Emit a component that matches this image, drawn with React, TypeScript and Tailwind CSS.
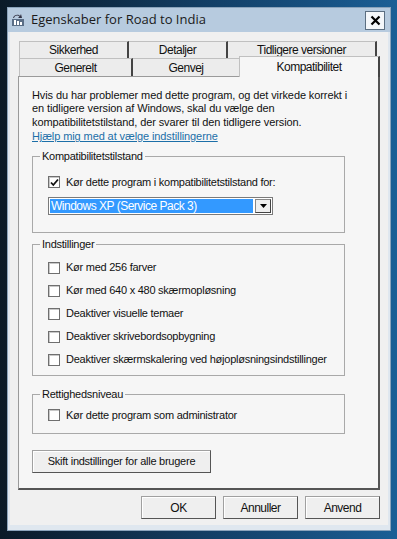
import React from 'react';

const font = { fontFamily: '"Liberation Sans", Arial, sans-serif' };

function Check({ checked = false }: { checked?: boolean }) {
  return (
    <span className="w-[12px] h-[12px] border border-[#6f6f6f] bg-white flex items-center justify-center shrink-0 shadow-[inset_1px_1px_0_#c8c8c8]">
      {checked && (
        <svg width="9" height="9" viewBox="0 0 9 9">
          <path d="M1 4.5 L3.3 7 L8 1.5" stroke="#111" strokeWidth="1.8" fill="none" />
        </svg>
      )}
    </span>
  );
}

function Row({ label, checked, h = 'h-[22px]' }: { label: string; checked?: boolean; h?: string }) {
  return (
    <div className={`flex items-center gap-[6px] whitespace-nowrap ${h}`}>
      <Check checked={checked} />
      <span>{label}</span>
    </div>
  );
}

function Group({ title, children, className }: { title: string; children: React.ReactNode; className?: string }) {
  return (
    <fieldset className={`border border-[#a9a9a9] pl-[15px] pr-[4px] m-0 ${className ?? ''}`}>
      <legend className="px-[2px] ml-[-8px] leading-[13px]">{title}</legend>
      {children}
    </fieldset>
  );
}

function Btn({ children, className }: { children: React.ReactNode; className?: string }) {
  return (
    <div className={`h-[23px] flex items-center justify-center bg-[#efefef] border border-[#a0a0a0] border-r-[#555] border-b-[#555] shadow-[inset_1px_1px_0_#fff] ${className ?? ''}`}>
      {children}
    </div>
  );
}

export default function App() {
  return (
    <div className="w-[397px] h-[539px] overflow-hidden bg-gradient-to-r from-[#0a1a28] via-[#123d63] to-[#1b5f96] pt-[7px] pl-[7px] text-[11px] tracking-[-0.25px] text-[#111]" style={font}>
      <div className="w-[384px] h-[524px] bg-[#dfe7ef] border border-[#8aa3bb] flex flex-col">
        {/* title bar */}
        <div className="h-[24px] bg-[#b7cbdf] flex items-center pl-[3px] pr-[5px] shrink-0">
          <svg width="16" height="14" viewBox="0 0 16 14" className="mr-[4px]">
            <rect x="1" y="6" width="12" height="7" fill="#5a6e86" />
            <rect x="3" y="7" width="2" height="5" fill="#fff" />
            <rect x="6" y="8" width="2" height="4" fill="#fff" />
            <rect x="9" y="9" width="2" height="3" fill="#fff" />
            <path d="M2 5 C3 1 8 1 9 3 L10 1 L11 5 L7 5 L8.5 3.5 C7 2 4 2 3 5 Z" fill="#334" />
          </svg>
          <span className="text-[13px] tracking-normal text-[#1a1a1a]" style={{ fontFamily: '"Open Sans", "Noto Sans", sans-serif' }}>Egenskaber for Road to India</span>
          <div className="ml-auto w-[20px] h-[19px] border border-[#5c6f82] bg-[#f4f7fa] flex items-center justify-center">
            <svg width="11" height="11" viewBox="0 0 11 11">
              <path d="M1.5 1.5 L9.5 9.5 M9.5 1.5 L1.5 9.5" stroke="#000" strokeWidth="2.2" />
            </svg>
          </div>
        </div>

        <div className="flex-1 bg-[#f0f0f0] mx-[2px] mb-[5px] px-[8px] pt-[9px] flex flex-col">
          {/* tabs */}
          <div className="flex h-[17px] text-[12px] tracking-[-0.5px] ml-[1px]">
            <div className="w-[110px] border-t border-l border-[#c0c0c0] border-r-2 border-r-[#444] bg-[#ececec] flex items-center justify-center">Sikkerhed</div>
            <div className="w-[99px] border-t border-[#c0c0c0] border-r-2 border-r-[#444] bg-[#ececec] flex items-center justify-center">Detaljer</div>
            <div className="w-[149px] border-t border-[#c0c0c0] border-r-2 border-r-[#444] bg-[#ececec] flex items-center justify-center">Tidligere versioner</div>
          </div>
          <div className="flex h-[18px] text-[12px] tracking-[-0.5px] ml-[1px] items-end">
            <div className="w-[114px] h-[18px] border-t border-l border-[#c0c0c0] border-r-2 border-r-[#444] bg-[#ececec] flex items-center justify-center">Generelt</div>
            <div className="w-[106px] h-[18px] border-t border-[#c0c0c0] bg-[#ececec] flex items-center justify-center">Genvej</div>
            <div className="w-[141px] h-[21px] border-t border-l border-[#c0c0c0] border-r-2 border-r-[#444] bg-[#f6f6f6] flex items-start justify-center pt-[1px] mb-[-1px] relative z-10">Kompatibilitet</div>
          </div>

          {/* panel */}
          <div className="w-[362px] h-[414px] border border-[#9a9a9a] border-r-2 border-r-[#555] border-b-2 border-b-[#555] bg-[#f6f6f6] px-[13px] pt-[12px] flex flex-col">
            <p className="leading-[13.4px] m-0 tracking-[-0.1px] whitespace-nowrap">
              Hvis du har problemer med dette program, og det virkede korrekt i<br />
              en tidligere version af Windows, skal du vælge den<br />
              kompatibilitetstilstand, der svarer til den tidligere version.
            </p>
            <a className="text-[#1c6fa8] underline mt-[1px] leading-[13px] tracking-[-0.1px]">Hjælp mig med at vælge indstillingerne</a>

            <Group title="Kompatibilitetstilstand" className="mt-[7px] h-[83px] w-[313px]">
              <div className="mt-[8px]">
                <Row label="Kør dette program i kompatibilitetstilstand for:" checked />
              </div>
              <div className="mt-[4px] w-[225px] h-[18px] border border-[#7a7a7a] bg-white flex items-center p-[1px]">
                <div className="flex-1 h-full bg-[#3399ff] text-white flex items-center pl-[1px] text-[12px] tracking-[-0.5px]">Windows XP (Service Pack 3)</div>
                <div className="w-[16px] h-full ml-[2px] border border-[#888] border-r-[#444] border-b-[#444] bg-[#efefef] flex items-center justify-center">
                  <svg width="7" height="4" viewBox="0 0 7 4"><path d="M0 0 H7 L3.5 4 Z" fill="#000" /></svg>
                </div>
              </div>
            </Group>

            <Group title="Indstillinger" className="mt-[5px] h-[138px] w-[313px]">
              <div className="mt-[5px] flex flex-col">
                <Row h="h-[23px]" label="Kør med 256 farver" />
                <Row h="h-[23px]" label="Kør med 640 x 480 skærmopløsning" />
                <Row h="h-[23px]" label="Deaktiver visuelle temaer" />
                <Row h="h-[23px]" label="Deaktiver skrivebordsopbygning" />
                <Row h="h-[23px]" label="Deaktiver skærmskalering ved højopløsningsindstillinger" />
              </div>
            </Group>

            <Group title="Rettighedsniveau" className="mt-[12px] h-[46px] w-[313px]">
              <div className="mt-[3px]">
                <Row label="Kør dette program som administrator" />
              </div>
            </Group>

            <Btn className="mt-[16px] w-[179px] h-[22px]">Skift indstillinger for alle brugere</Btn>
          </div>

          {/* bottom buttons */}
          <div className="flex justify-end gap-[7px] mt-[6px] w-[362px] text-[12px] tracking-[-0.5px]">
            <Btn className="w-[75px] border-[#222] border-r-[#222] border-b-[#222]">OK</Btn>
            <Btn className="w-[75px]">Annuller</Btn>
            <Btn className="w-[75px]">Anvend</Btn>
          </div>
        </div>
      </div>
    </div>
  );
}
